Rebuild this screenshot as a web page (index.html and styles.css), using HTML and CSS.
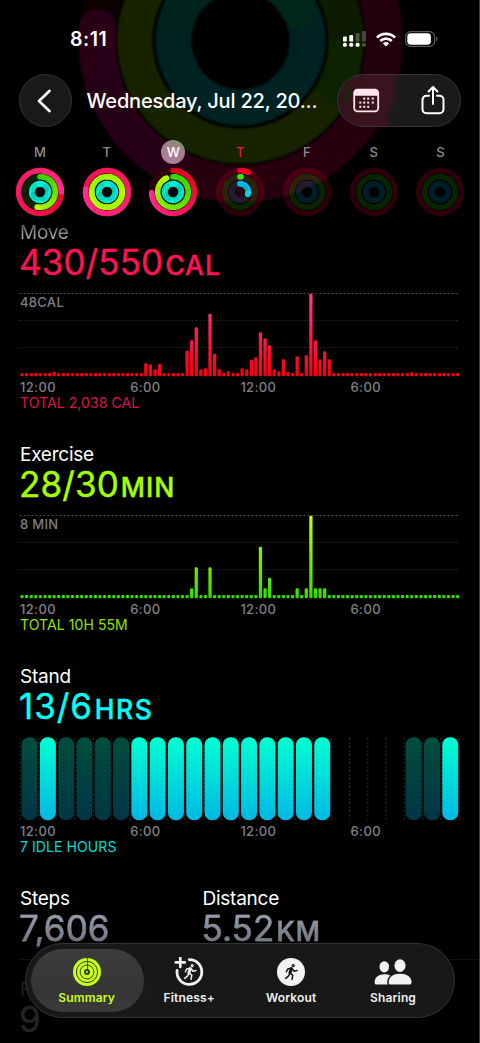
FILE: index.html
```html
<!DOCTYPE html>
<html lang="en">
<head>
<meta charset="utf-8">
<title>Activity Summary</title>
<link rel="stylesheet" href="styles.css">
</head>
<body>
<div class="phone">
  <svg class="backdrop" id="backdrop" width="480" height="222" viewBox="0 0 480 222"></svg>

  <header class="header">
    <div class="status">
      <span class="clock">8:11</span>
      <div class="status-icons">
        <svg width="24" height="17" viewBox="0 0 24 17" fill="#fff">
          <rect x="0" y="5.4" width="3.8" height="5.2" rx="1.2"/><rect x="6.3" y="4" width="3.8" height="6.6" rx="1.2"/>
          <rect x="12.7" y="2" width="3.8" height="8.6" rx="1.2" opacity=".25"/><rect x="19.2" y="0" width="3.8" height="10.6" rx="1.2" opacity=".25"/>
          <rect x="0" y="11.8" width="3.8" height="4" rx="1.5"/><rect x="6.3" y="11.8" width="3.8" height="4" rx="1.5"/>
          <rect x="12.7" y="11.8" width="3.8" height="4" rx="1.5"/><rect x="19.2" y="11.8" width="3.8" height="4" rx="1.5" opacity=".25"/>
        </svg>
        <svg width="20" height="15" viewBox="0 0 20 15" fill="none" stroke="#fff" stroke-width="2.7">
          <path d="M1 5.6A12.8 12.8 0 0 1 19 5.6"/><path d="M4.3 9A8.1 8.1 0 0 1 15.7 9"/>
          <path d="M10 14.6L6.9 11.4A4.4 4.4 0 0 1 13.1 11.4Z" fill="#fff" stroke="none"/>
        </svg>
        <svg width="33" height="16" viewBox="0 0 33 16">
          <rect x=".6" y=".6" width="29" height="14.8" rx="5" fill="none" stroke="#5c585a" stroke-width="1.1"/>
          <rect x="2.3" y="2.3" width="23.6" height="11.4" rx="3.4" fill="#fff"/>
          <path d="M31 5.4a2.9 2.9 0 0 1 0 5.2z" fill="#5c585a"/>
        </svg>
      </div>
    </div>

    <nav class="nav">
      <button class="round" aria-label="Back">
        <svg width="16" height="24" viewBox="0 0 16 24" fill="none" stroke="#fff" stroke-width="2.6" stroke-linecap="round" stroke-linejoin="round"><path d="M13.6 1.8L3 12L13.6 22.200"/></svg>
      </button>
      <h1 class="title">Wednesday, Jul 22, 20...</h1>
      <div class="actions">
        <svg width="27" height="25" viewBox="0 0 27 25">
          <rect x="1.200" y="1.7" width="24" height="21.6" rx="3.4" fill="none" stroke="#ffe9ef" stroke-width="1.8"/>
          <path d="M1 7.8V5a4 4 0 0 1 4-4h16.4a4 4 0 0 1 4 4v2.8z" fill="#ffe3ec"/>
          <g fill="#ffe9ef"><rect x="10.2" y="9.6" width="2" height="2"/><rect x="14.2" y="9.6" width="2" height="2"/><rect x="18.8" y="9.6" width="2" height="2"/><rect x="6.3" y="13.6" width="2" height="2"/><rect x="10.2" y="13.6" width="2" height="2"/><rect x="14.2" y="13.6" width="2" height="2"/><rect x="18.8" y="13.6" width="2" height="2"/><rect x="6.3" y="17.8" width="2" height="2"/><rect x="10.2" y="17.8" width="2" height="2"/><rect x="14.2" y="17.8" width="2" height="2"/></g>
        </svg>
        <svg width="24" height="30" viewBox="0 0 24 30" fill="none" stroke="#fff" stroke-width="2" stroke-linecap="round" stroke-linejoin="round">
          <path d="M8 9.700H5.500a4 4 0 0 0-4 4v9.6a4 4 0 0 0 4 4h13a4 4 0 0 0 4-4v-9.6a4 4 0 0 0-4-4H16"/><path d="M12 17.900V1.100M7.600 5.500L12 1L16.400 5.500"/>
        </svg>
      </div>
    </nav>

    <div class="week" id="week"></div>
  </header>

  <main class="content">
    <section class="metric move">
      <h2 class="label fading">Move</h2>
      <p class="value">430/550<span class="unit">CAL</span></p>
      <div class="chart" data-chart="move"><span class="peak">48CAL</span></div>
      <div class="axis"><span>12:00</span><span>6:00</span><span>12:00</span><span>6:00</span></div>
      <p class="total">TOTAL 2,038 CAL</p>
    </section>
    <section class="metric exercise">
      <h2 class="label">Exercise</h2>
      <p class="value">28/30<span class="unit">MIN</span></p>
      <div class="chart" data-chart="exercise"><span class="peak">8 MIN</span></div>
      <div class="axis"><span>12:00</span><span>6:00</span><span>12:00</span><span>6:00</span></div>
      <p class="total">TOTAL 10H 55M</p>
    </section>
    <section class="metric stand">
      <h2 class="label">Stand</h2>
      <p class="value">13/6<span class="unit">HRS</span></p>
      <div class="chart" data-chart="stand"></div>
      <div class="axis"><span>12:00</span><span>6:00</span><span>12:00</span><span>6:00</span></div>
      <p class="total">7 IDLE HOURS</p>
    </section>
    <section class="pair">
      <div><h2 class="label">Steps</h2><p class="value">7,606</p></div>
      <div><h2 class="label">Distance</h2><p class="value">5.52<span class="unit">KM</span></p></div>
    </section>
    <section class="flights">
      <h2 class="label">Flights Climbed</h2><p class="value">9</p>
    </section>
  </main>

  <nav class="tabs">
    <a class="tab active">
      <svg width="30" height="30" viewBox="0 0 30 30"><circle cx="15" cy="15" r="14" fill="#c6ff1e"/>
        <g fill="none" stroke="#3a4018" stroke-width="1"><circle cx="15" cy="15" r="10.6"/><circle cx="15" cy="15" r="6.9"/></g>
        <circle cx="15" cy="15" r="3" fill="#3a4018"/><path d="M15.6 1v12.5" stroke="#3a4018" stroke-width="1"/><circle cx="15" cy="15" r="1" fill="#c6ff1e"/></svg>
      <span>Summary</span>
    </a>
    <a class="tab">
      <svg width="30" height="30" viewBox="0 0 30 30" fill="none" stroke="#f2f2f2" stroke-linecap="round" stroke-linejoin="round">
        <path d="M15.2 2.6A12.4 12.4 0 1 1 3.1 13.4" stroke-width="2.8"/><path d="M6.3 .8v9.2M1.7 5.4h9.2" stroke-width="2.6"/>
        <use href="#runner" x="1" y="0"/></svg>
      <span>Fitness+</span>
    </a>
    <a class="tab">
      <svg width="30" height="30" viewBox="0 0 30 30"><circle cx="15" cy="15" r="14" fill="#f2f2f2"/>
        <g stroke="#151515" fill="none" stroke-linecap="round" stroke-linejoin="round"><g id="runner">
          <circle cx="17.2" cy="8.6" r="1" stroke-width="1.2"/>
          <path d="M15.4 11.6L13.9 15.8" stroke-width="3"/>
          <path d="M15.2 11.2L11.7 12L10.4 14.8M16.4 12L18 14.2L21 13.6M14 16.4L12.4 19.2L9.6 21.4M14.6 16.2L16.8 18.4L16 22.4" stroke-width="1.5"/>
        </g></g></svg>
      <span>Workout</span>
    </a>
    <a class="tab">
      <svg width="38" height="30" viewBox="0 0 38 30" fill="#f2f2f2">
        <ellipse cx="10.3" cy="9.8" rx="4.8" ry="5.6"/><path d="M.6 25.2C.6 20.4 4.7 17.2 10.4 17.2C12.6 17.2 14.6 17.7 16.2 18.6C14.2 20.3 13.2 22.6 13.2 25.2C13.2 26.2 13.4 27 13.8 27.5H2.4C1.2 27.5 .6 26.6 .6 25.2z"/>
        <ellipse cx="26" cy="8.6" rx="5.6" ry="6.3"/><path d="M14.7 25.2C14.7 20 19.4 16.8 26 16.8C32.8 16.8 37.5 20 37.5 25.2C37.5 26.6 36.9 27.5 35.5 27.5H16.7C15.3 27.5 14.7 26.6 14.7 25.2z"/></svg>
      <span>Sharing</span>
    </a>
  </nav>
</div>
<script src="app.js"></script>
</body>
</html>
```
FILE: styles.css
```css
* { box-sizing: border-box; }
body { margin: 0; background: #000; font-family: Inter, "Liberation Sans", sans-serif; color: #fff; }
h1, h2, p { margin: 0; font-weight: 400; }
.phone { position: relative; width: 480px; height: 1043px; overflow: hidden; background: #000; border-right: 1px solid #3c3c3c; }
.backdrop { position: absolute; top: 0; left: 0; }

.header { position: relative; height: 222px; padding-top: 27px; }
.status { display: flex; align-items: center; justify-content: space-between; height: 24px; padding: 0 41px 0 70px; }
.clock { font-size: 19.5px; font-weight: 600; letter-spacing: .5px; }
.status-icons { display: flex; align-items: center; gap: 9px; }
.nav { display: flex; align-items: center; height: 53px; margin-top: 23px; padding: 0 18px 0 19px; }
.round { display: flex; align-items: center; justify-content: center; width: 53px; height: 53px; padding: 0 3px 0 0; border: 1px solid #333; border-radius: 50%; background: #191919; }
.title { width: 251px; padding-left: 14.5px; white-space: nowrap; font-size: 20px; font-weight: 500; letter-spacing: -.2px; }
.actions { display: flex; align-items: center; justify-content: space-between; width: 124px; height: 53px; margin-left: 14px; padding: 0 15px; border: 1px solid #383335; border-radius: 27px;
  background: radial-gradient(ellipse 7px 13px at 10px 18px, #18260f 0, #18260f00 100%), radial-gradient(ellipse 12px 20px at 58px 43px, #1b1b1b 40%, #1b1b1b00 100%), linear-gradient(92deg, #35131b 0, #3c141f 42%, #1b1b1b 49%, #191919 100%); }

.week { display: flex; margin-top: 12.5px; padding-left: 6.5px; }
.day { display: flex; flex-direction: column; align-items: center; width: 66.75px; }
.day-name { display: flex; align-items: center; justify-content: center; width: 24px; height: 24px; border-radius: 50%; font-size: 13px; font-weight: 500; color: #8d8d8d; }
.day-name.selected { color: #fff; background: linear-gradient(200deg, #80926c 5%, #a57f91 45%, #ad8094); }
.day-name.today { color: #df1c4b; }
.day svg { margin-top: 3.5px; }

.content { padding-left: 20px; }
.metric { height: 222px; }
.label { font-size: 19px; line-height: 22px; letter-spacing: -.25px; }
.fading { background: linear-gradient(#606060 20%, #b5b5b5 80%); -webkit-background-clip: text; background-clip: text; color: transparent; }
.value { height: 36px; margin-left: -1px; font-size: 35px; line-height: 36px; font-weight: 400; letter-spacing: .1px; white-space: nowrap; -webkit-text-stroke: .4px currentColor; }
.unit { margin-left: 2px; font-size: 26.500px; line-height: 1; font-weight: 500; letter-spacing: 1px; }
.move .value { color: #ff1350; }
.exercise .value { color: #a6ff00; }
.stand .value { color: #00fff6; letter-spacing: .9px; }
.stand .unit { letter-spacing: 1.500px; }
.chart { position: relative; height: 84px; margin-top: 13px; }
.chart svg { display: block; margin-left: -1px; }
.peak { position: absolute; left: 0; top: 1px; font-size: 13px; line-height: 16px; font-weight: 500; letter-spacing: .3px; color: #7f7f84; }
.axis { display: grid; grid-template-columns: repeat(4, 110.2px); margin-top: 2px; height: 16px; font-size: 13px; line-height: 16px; font-weight: 500; letter-spacing: .35px; color: #818186; }
.total { font-size: 14px; line-height: 16px; letter-spacing: .08px; }
.move .total { color: #dc1549; }
.exercise .total { color: #92e000; }
.stand .total { color: #00ddd2; }

.pair { display: grid; grid-template-columns: 182.5px 1fr; height: 72px; border-bottom: 1px solid #121212; }
.pair .value { background: linear-gradient(#989eab 15%, #70757f 90%); -webkit-background-clip: text; background-clip: text; color: transparent; -webkit-text-stroke: .4px #858a96; }
.flights { padding-top: 19px; }
.flights .label { color: #1f1f1f; }
.flights .value { color: #242426; }

.tabs { position: absolute; left: 25px; top: 943px; width: 430px; height: 75px; display: flex; padding: 5px 10px 5px 5px; border: 1px solid #333; border-radius: 38px; background: #191919f2; }
.tab { display: flex; flex-direction: column; align-items: center; width: 102.5px; padding-top: 8px; font-size: 12px; line-height: 16px; font-weight: 600; letter-spacing: .15px; color: #f0f0f0; }
.tab span { margin-top: 3px; }
.tab.active { width: 114px; margin-right: -6px; padding-right: 2px; border-radius: 32px; background: linear-gradient(#3e3e3ef2, #373737f2 70%, #3d3d3df2); color: #c6ff1e; }
```
FILE: app.js
```javascript
const mix = (a, b, t) => 'rgb(' + a.map((v, i) => Math.round(v + (b[i] - v) * t)) + ')';
const MOVE = [[229, 0, 28], [255, 45, 140]];
const EXERCISE = [[50, 215, 0], [184, 255, 0]];

const point = (cx, cy, r, turn) => {
  const a = turn * 2 * Math.PI;
  return (cx + r * Math.sin(a)).toFixed(2) + ' ' + (cy - r * Math.cos(a)).toFixed(2);
};

// Progress arc in short strokes so the colour runs along its length.
function arc(cx, cy, r, width, amount, colors) {
  const steps = Math.max(2, Math.ceil(amount * 60));
  let out = '';
  for (let i = 0; i < steps; i++) {
    const a = amount * i / steps, b = amount * (i + 1) / steps;
    const cap = i === 0 || i === steps - 1 ? 'round' : 'butt';
    out += `<path d="M${point(cx, cy, r, a)}A${r} ${r} 0 0 1 ${point(cx, cy, r, b + (i < steps - 1 ? .003 : 0))}" fill="none" stroke="${mix(colors[0], colors[1], i / steps)}" stroke-width="${width}" stroke-linecap="${cap}"/>`;
  }
  return out;
}

const FULL = [[0, 237, 212], [0, 240, 205]];
const LIME = [[150, 250, 0], [175, 255, 0]];
const days = [
  { name: 'M', rings: [[1.25, MOVE], [.53, EXERCISE], [1, FULL]] },
  { name: 'T', rings: [[1.77, MOVE], [1.75, LIME], [1, FULL]] },
  { name: 'W', cls: 'selected', rings: [[.745, MOVE], [.93, EXERCISE], [1, FULL]] },
  { name: 'T', cls: 'today', rings: [[.065, [[240, 0, 30], [245, 5, 45]]], [.01, [[60, 225, 0], [70, 230, 0]]], [.29, [[0, 180, 235], [0, 215, 235]]]] },
  { name: 'F' }, { name: 'S' }, { name: 'S' }
];
document.getElementById('week').innerHTML = days.map(d => {
  const dims = [[21.4, 5.5], [15.3, 5.6], [8.2, 6]];
  const tracks = ['rgba(255,0,45,.17)', 'rgba(60,240,0,.15)', 'rgba(0,180,230,.17)'];
  let s = d.cls !== 'today' && d.rings ? '<circle cx="25" cy="25" r="24.5" fill="#000" opacity=".65"/>' : '';
  dims.forEach(([r, w], i) => {
    s += `<circle cx="25" cy="25" r="${r}" fill="none" stroke="${tracks[i]}" stroke-width="${w}"/>`;
    if (d.rings) s += arc(25, 25, r, w, ...d.rings[i]);
  });
  return `<div class="day"><span class="day-name ${d.cls || ''}">${d.name}</span><svg width="50" height="50" viewBox="0 0 50 50">${s}</svg></div>`;
}).join('');

// Dimmed oversized rings behind the header.
document.getElementById('backdrop').innerHTML =
  '<defs><filter id="soft"><feGaussianBlur stdDeviation="1.2"/></filter></defs><g filter="url(#soft)">' +
  '<circle cx="240.5" cy="40.5" r="143.5" fill="none" stroke="#080103" stroke-width="37"/>' +
  arc(240.5, 40.5, 143.5, 37, .764, [[34, 0, 6], [41, 6, 22]]) +
  arc(240.5, 40.5, 105.5, 35, .97, [[12, 30, 0], [28, 36, 0]]) +
  arc(240.5, 40.5, 67, 36, 1, [[0, 33, 33], [0, 33, 31]]) +
  '<path d="M240 -26.5A67 67 0 0 1 299 10" fill="none" stroke="#00261f" stroke-width="36" stroke-linecap="round"/></g>';

const moveBars = { 7: 4.5, 27: 13, 28: 12, 29: 7, 30: 12.5, 36: 25.5, 37: 36, 38: 49, 39: 7, 40: 8, 41: 62.5, 42: 22.5, 43: 7, 45: 5,
  48: 8, 49: 7, 50: 16.5, 51: 19, 52: 44, 53: 38, 54: 31, 55: 7, 56: 5, 57: 17, 58: 4.5, 60: 20, 62: 21, 63: 82.5, 64: 36, 65: 17, 66: 25, 67: 17, 85: 4 };
const exerciseBars = { 37: 10, 38: 31, 41: 31, 52: 51.5, 53: 10, 54: 20.5, 60: 10, 62: 10, 63: 82.5, 64: 10, 65: 10, 66: 10 };

function quarterChart(id, bars, top, bottom) {
  let s = `<defs><linearGradient id="${id}" gradientUnits="userSpaceOnUse" x1="0" y1="0" x2="0" y2="83"><stop offset="0" stop-color="${top}"/><stop offset="1" stop-color="${bottom}"/></linearGradient></defs>`;
  [.5, 27.5, 54.5].forEach((y, i) => {
    s += `<path d="M.5 ${y}H440" stroke="${i ? '#252525' : '#4a4a4a'}" stroke-dasharray="2 2"/>`;
  });
  for (let i = 0; i < 96; i++) {
    const h = bars[i] || 3.2;
    s += `<rect x="${(1.4 + i * 4.585).toFixed(2)}" y="${83.2 - h}" width="3.3" height="${h}" rx="1.3" fill="url(#${id})"/>`;
  }
  return s;
}
function hourChart() {
  let s = '<defs><linearGradient id="on" x1="0" y1="0" x2="0" y2="1"><stop offset="0" stop-color="#00ffd2"/><stop offset="1" stop-color="#00b8e4"/></linearGradient><linearGradient id="off" x1="0" y1="0" x2="0" y2="1"><stop offset="0" stop-color="#004d3d"/><stop offset="1" stop-color="#003646"/></linearGradient></defs>';
  for (let i = 0; i <= 24; i++) {
    s += `<path d="M${(1.3 + i * 18.29).toFixed(2)} 1V83" stroke="#363636" stroke-dasharray="1.5 2.5"/>`;
  }
  for (let i = 0; i < 24; i++) {
    if (i > 16 && i < 21) continue;
    const off = i === 0 || (i > 1 && i < 6) || i === 21 || i === 22;
    s += `<rect x="${(2.6 + i * 18.29).toFixed(2)}" y=".3" width="16" height="83" rx="7.5" fill="url(#${off ? 'off' : 'on'})"/>`;
  }
  return s;
}
const charts = {
  move: quarterChart('gm', moveBars, '#ff3c92', '#f5000f'),
  exercise: quarterChart('ge', exerciseBars, '#c4ff00', '#34dc00'),
  stand: hourChart()
};
document.querySelectorAll('.chart').forEach(el => {
  el.insertAdjacentHTML('afterbegin', `<svg width="441" height="84" viewBox="0 0 441 84">${charts[el.dataset.chart]}</svg>`);
});
```
